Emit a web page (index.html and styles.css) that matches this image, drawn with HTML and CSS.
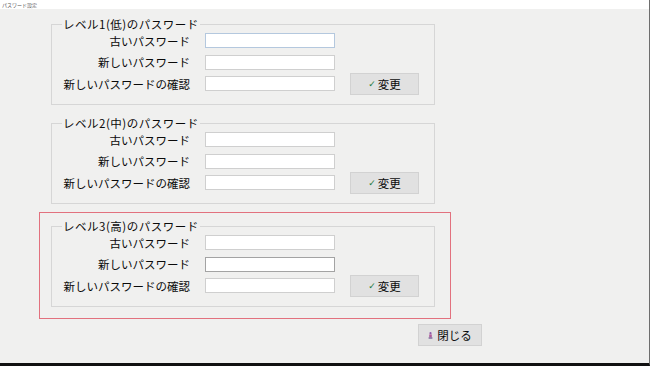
FILE: index.html
```html
<!DOCTYPE html>
<html lang="ja">
<head>
    <meta charset="UTF-8">
    <meta name="viewport" content="width=device-width, initial-scale=1.0">
    <title>パスワード設定</title>
    <link rel="stylesheet" href="styles.css">
</head>
<body>
    <div class="window">
        <div class="titlebar">パスワード設定</div>
        <div class="content">
            <fieldset class="group">
                <legend>レベル1(低)のパスワード</legend>
                <div class="form-grid">
                    <label>古いパスワード</label>
                    <input type="password" class="field field-focus">
                    <label>新しいパスワード</label>
                    <input type="password" class="field">
                    <label>新しいパスワードの確認</label>
                    <input type="password" class="field">
                    <button class="btn btn-change"><span class="check">✓</span>変更</button>
                </div>
            </fieldset>

            <fieldset class="group group-mid">
                <legend>レベル2(中)のパスワード</legend>
                <div class="form-grid">
                    <label>古いパスワード</label>
                    <input type="password" class="field">
                    <label>新しいパスワード</label>
                    <input type="password" class="field">
                    <label>新しいパスワードの確認</label>
                    <input type="password" class="field">
                    <button class="btn btn-change"><span class="check">✓</span>変更</button>
                </div>
            </fieldset>

            <div class="highlight">
                <fieldset class="group">
                    <legend>レベル3(高)のパスワード</legend>
                    <div class="form-grid">
                        <label>古いパスワード</label>
                        <input type="password" class="field">
                        <label>新しいパスワード</label>
                        <input type="password" class="field field-hover">
                        <label>新しいパスワードの確認</label>
                        <input type="password" class="field">
                        <button class="btn btn-change"><span class="check">✓</span>変更</button>
                    </div>
                </fieldset>
            </div>

            <div class="footer">
                <button class="btn btn-close">
                    <svg class="exit-icon" width="5" height="7" viewBox="0 0 5 7">
                        <circle cx="2.5" cy="1.2" r="1.1" fill="#8e5aa8"/>
                        <rect x="1.2" y="2.4" width="2.6" height="2.8" fill="#b05c9c"/>
                        <rect x="0.6" y="5.4" width="3.8" height="1.2" fill="#6a4c8c"/>
                    </svg>閉じる
                </button>
            </div>
        </div>
    </div>
</body>
</html>
```

FILE: styles.css
```css
* {
    box-sizing: border-box;
}

body {
    margin: 0;
    padding: 0;
    font-family: "Noto Sans CJK JP", "Noto Sans", sans-serif;
    font-size: 11.5px;
    color: #0a0a0a;
}

.window {
    width: 650px;
    height: 366px;
    background-color: #f0f0ef;
    border-right: 1px solid #6e6e6e;
    border-bottom: 3px solid #111111;
    overflow: hidden;
}

.titlebar {
    height: 9px;
    line-height: 9px;
    padding-left: 2px;
    background-color: #ffffff;
    font-size: 5px;
    color: #555555;
}

.content {
    padding: 9px 0 0 39px;
}

.group {
    width: 384px;
    margin: 0 0 0 12px;
    padding: 0 0 9.5px 0;
    border: 1px solid #d6d6d6;
    min-inline-size: 0;
}

.group-mid {
    margin-top: 12px;
}

.group legend {
    margin-left: 10px;
    padding: 0 1px;
    line-height: 12px;
    font-size: 11.5px;
    letter-spacing: 0.5px;
}

.form-grid {
    display: grid;
    grid-template-columns: 138px 130px 69px;
    grid-template-rows: repeat(3, 21.5px);
    column-gap: 15px;
    align-items: center;
}

.form-grid label {
    grid-column: 1;
    text-align: right;
    line-height: 14px;
    white-space: nowrap;
}

.field {
    grid-column: 2;
    width: 130px;
    height: 15px;
    margin: 0;
    padding: 0 3px;
    background-color: #ffffff;
    border: 1px solid #cfcfcf;
    outline: none;
}

.field-focus {
    border-color: #b4c8de;
}

.field-hover {
    border-color: #a3a3a3;
}

.btn {
    display: flex;
    align-items: center;
    justify-content: center;
    height: 22px;
    margin: 0;
    padding: 0;
    background-color: #e1e1e1;
    border: 1px solid #d2d2d2;
    font-family: inherit;
    font-size: 11.5px;
    color: #0a0a0a;
    line-height: 14px;
}

.btn-change {
    grid-column: 3;
    grid-row: 3;
    align-self: center;
    width: 69px;
}

.check {
    color: #1f7a3a;
    font-size: 9px;
    font-weight: bold;
    margin-right: 2px;
    font-family: "DejaVu Sans", sans-serif;
}

.highlight {
    width: 412px;
    margin-top: 8px;
    padding: 7px 15px 11px 11px;
    border: 1px solid #e2717e;
}

.highlight .group {
    margin-left: 0;
}

.footer {
    padding: 5px 0 0 379px;
}

.btn-close {
    width: 64px;
}

.exit-icon {
    margin-right: 4px;
}
```
